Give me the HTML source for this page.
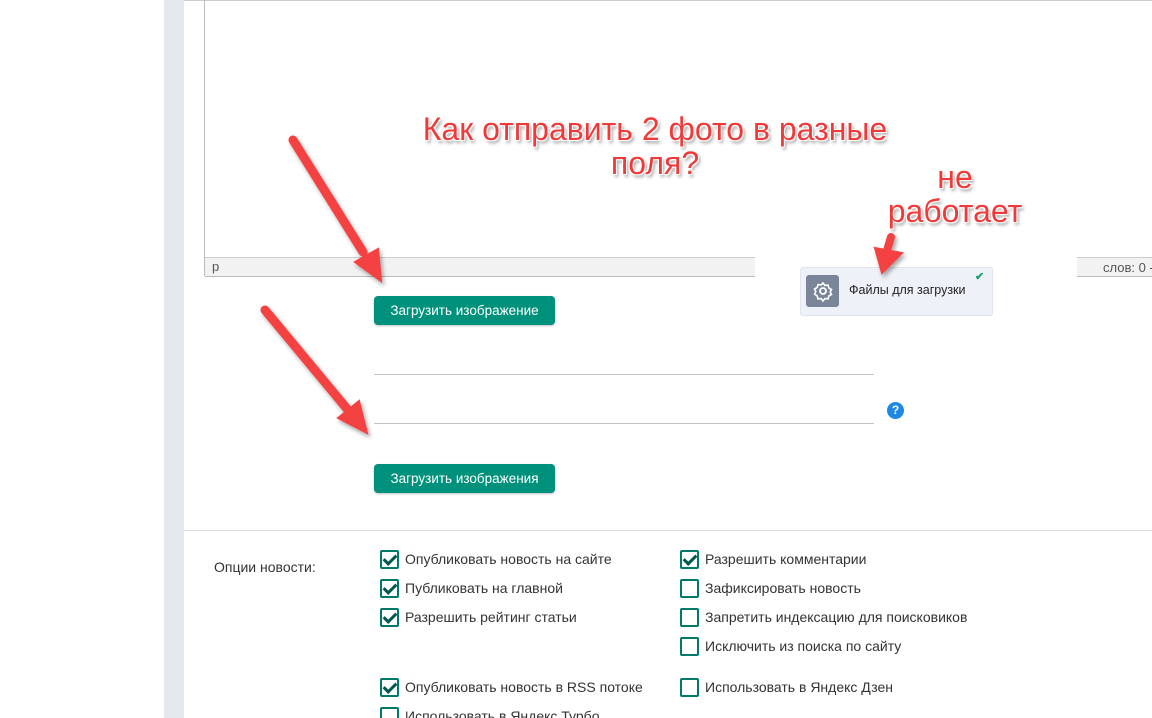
<!DOCTYPE html>
<html><head><meta charset="utf-8"><style>
html,body{margin:0;width:1152px;height:718px;overflow:hidden}
body{background:#fff;font-family:"Liberation Sans",sans-serif;position:relative}
.a{position:absolute}
.btn{position:absolute;left:374px;width:181px;height:29px;background:#00917c;border-radius:4px;color:#fff;font-size:13.5px;line-height:30px;text-align:center;box-shadow:0 1px 2px rgba(0,0,0,.25)}
.cb{position:absolute;width:15px;height:15px;border:2px solid #00796b;border-radius:2px}
.cb.on::after{content:"";position:absolute;left:4px;top:0px;width:5px;height:10px;border:solid #00574b;border-width:0 3px 3px 0;transform:rotate(45deg)}
.lb{position:absolute;font-size:14px;color:#333;white-space:nowrap}
.red{position:absolute;color:#f03a3a;font-family:"Liberation Sans",sans-serif;font-size:32px;text-shadow:1px 1px 0 #fff,-1px -1px 0 #fff,1px -1px 0 #fff,-1px 1px 0 #fff,2px 3px 3px rgba(0,0,0,.4);text-align:center;line-height:34px}
</style></head><body>
<div class="a" style="left:164px;top:0;width:20px;height:718px;background:#e4e8ee"></div>
<div class="a" style="left:184px;top:0;width:968px;height:1px;background:#ccc"></div>
<div class="a" style="left:204px;top:0;width:1px;height:276px;background:#bbb"></div>
<div class="a" style="left:205px;top:257px;width:550px;height:18px;background:#f2f2f2;border-top:1px solid #ccc;border-bottom:1px solid #bbb"></div>
<div class="a" style="left:212px;top:259px;font-size:13px;color:#555">p</div>
<div class="a" style="left:1077px;top:257px;width:75px;height:18px;background:#f2f2f2;border-top:1px solid #ccc;border-bottom:1px solid #bbb"></div>
<div class="a" style="left:1103px;top:260px;font-size:13px;color:#555;white-space:nowrap">слов: 0 -</div>
<div class="btn" style="top:296px">Загрузить изображение</div>
<div class="btn" style="top:464px">Загрузить изображения</div>
<div class="a" style="left:374px;top:374px;width:500px;height:1px;background:#c4c4c4"></div>
<div class="a" style="left:374px;top:423px;width:500px;height:1px;background:#c4c4c4"></div>
<div class="a" style="left:887px;top:402px;width:17px;height:17px;border-radius:50%;background:#1e88e5;color:#fff;font-size:12px;font-weight:bold;text-align:center;line-height:17px">?</div>
<div class="a" style="left:800px;top:267px;width:191px;height:47px;background:#eef1f8;border:1px solid #e0e4ee;border-radius:3px"></div>
<div class="a" style="left:806px;top:275px;width:33px;height:32px;background:#7a8599;border-radius:3px"></div>
<svg class="a" style="left:812px;top:280px" width="22" height="22" viewBox="0 0 22 22"><circle cx="11" cy="11" r="3" fill="none" stroke="#fff" stroke-width="1.8"/><path d="M11 3l2 2.5 3-.5 .8 3 2.7 1.5-1.3 2.5 1.3 2.5-2.7 1.5-.8 3-3-.5-2 2.5-2-2.5-3 .5-.8-3L2.5 14l1.3-2.5L2.5 9l2.7-1.5.8-3 3 .5z" fill="none" stroke="#fff" stroke-width="1.6"/></svg>
<div class="a" style="left:849px;top:283px;font-size:12.5px;color:#222;white-space:nowrap">Файлы для загрузки</div>
<div class="a" style="left:975px;top:270px;color:#1aa36e;font-size:11px;font-weight:bold">✔</div>
<div class="a" style="left:184px;top:530px;width:968px;height:1px;background:#ddd"></div>
<div class="lb" style="left:214px;top:559px">Опции новости:</div>
<div class="cb on" style="left:380px;top:550px"></div><div class="lb" style="left:405px;top:551px">Опубликовать новость на сайте</div>
<div class="cb on" style="left:380px;top:579px"></div><div class="lb" style="left:405px;top:580px">Публиковать на главной</div>
<div class="cb on" style="left:380px;top:608px"></div><div class="lb" style="left:405px;top:609px">Разрешить рейтинг статьи</div>
<div class="cb on" style="left:380px;top:678px"></div><div class="lb" style="left:405px;top:679px">Опубликовать новость в RSS потоке</div>
<div class="cb" style="left:380px;top:707px"></div><div class="lb" style="left:405px;top:708px">Использовать в Яндекс Турбо</div>
<div class="cb on" style="left:680px;top:550px"></div><div class="lb" style="left:705px;top:551px">Разрешить комментарии</div>
<div class="cb" style="left:680px;top:579px"></div><div class="lb" style="left:705px;top:580px">Зафиксировать новость</div>
<div class="cb" style="left:680px;top:608px"></div><div class="lb" style="left:705px;top:609px">Запретить индексацию для поисковиков</div>
<div class="cb" style="left:680px;top:637px"></div><div class="lb" style="left:705px;top:638px">Исключить из поиска по сайту</div>
<div class="cb" style="left:680px;top:678px"></div><div class="lb" style="left:705px;top:679px">Использовать в Яндекс Дзен</div>
<div class="red" style="left:410px;top:112px;width:490px">Как отправить 2 фото в разные<br>поля?</div>
<div class="red" style="left:870px;top:160px;width:170px">не<br>работает</div>
<svg class="a" style="left:0;top:0" width="1152" height="718"><defs><filter id="s"><feDropShadow dx="2" dy="3" stdDeviation="2" flood-opacity=".35"/></filter></defs>
<g fill="#f44242" stroke="#f44242" stroke-linecap="round" filter="url(#s)">
<line x1="293" y1="140" x2="363" y2="252" stroke-width="9"/><polygon points="355,262 378,249 381,281" stroke-width="2"/>
<line x1="265" y1="310" x2="348" y2="410" stroke-width="9"/><polygon points="338,418 359,401 367,433" stroke-width="2"/>
<line x1="891" y1="237" x2="886" y2="254" stroke-width="8"/><polygon points="875,248 902,253 882,273" stroke-width="2"/>
</g></svg>
</body></html>
